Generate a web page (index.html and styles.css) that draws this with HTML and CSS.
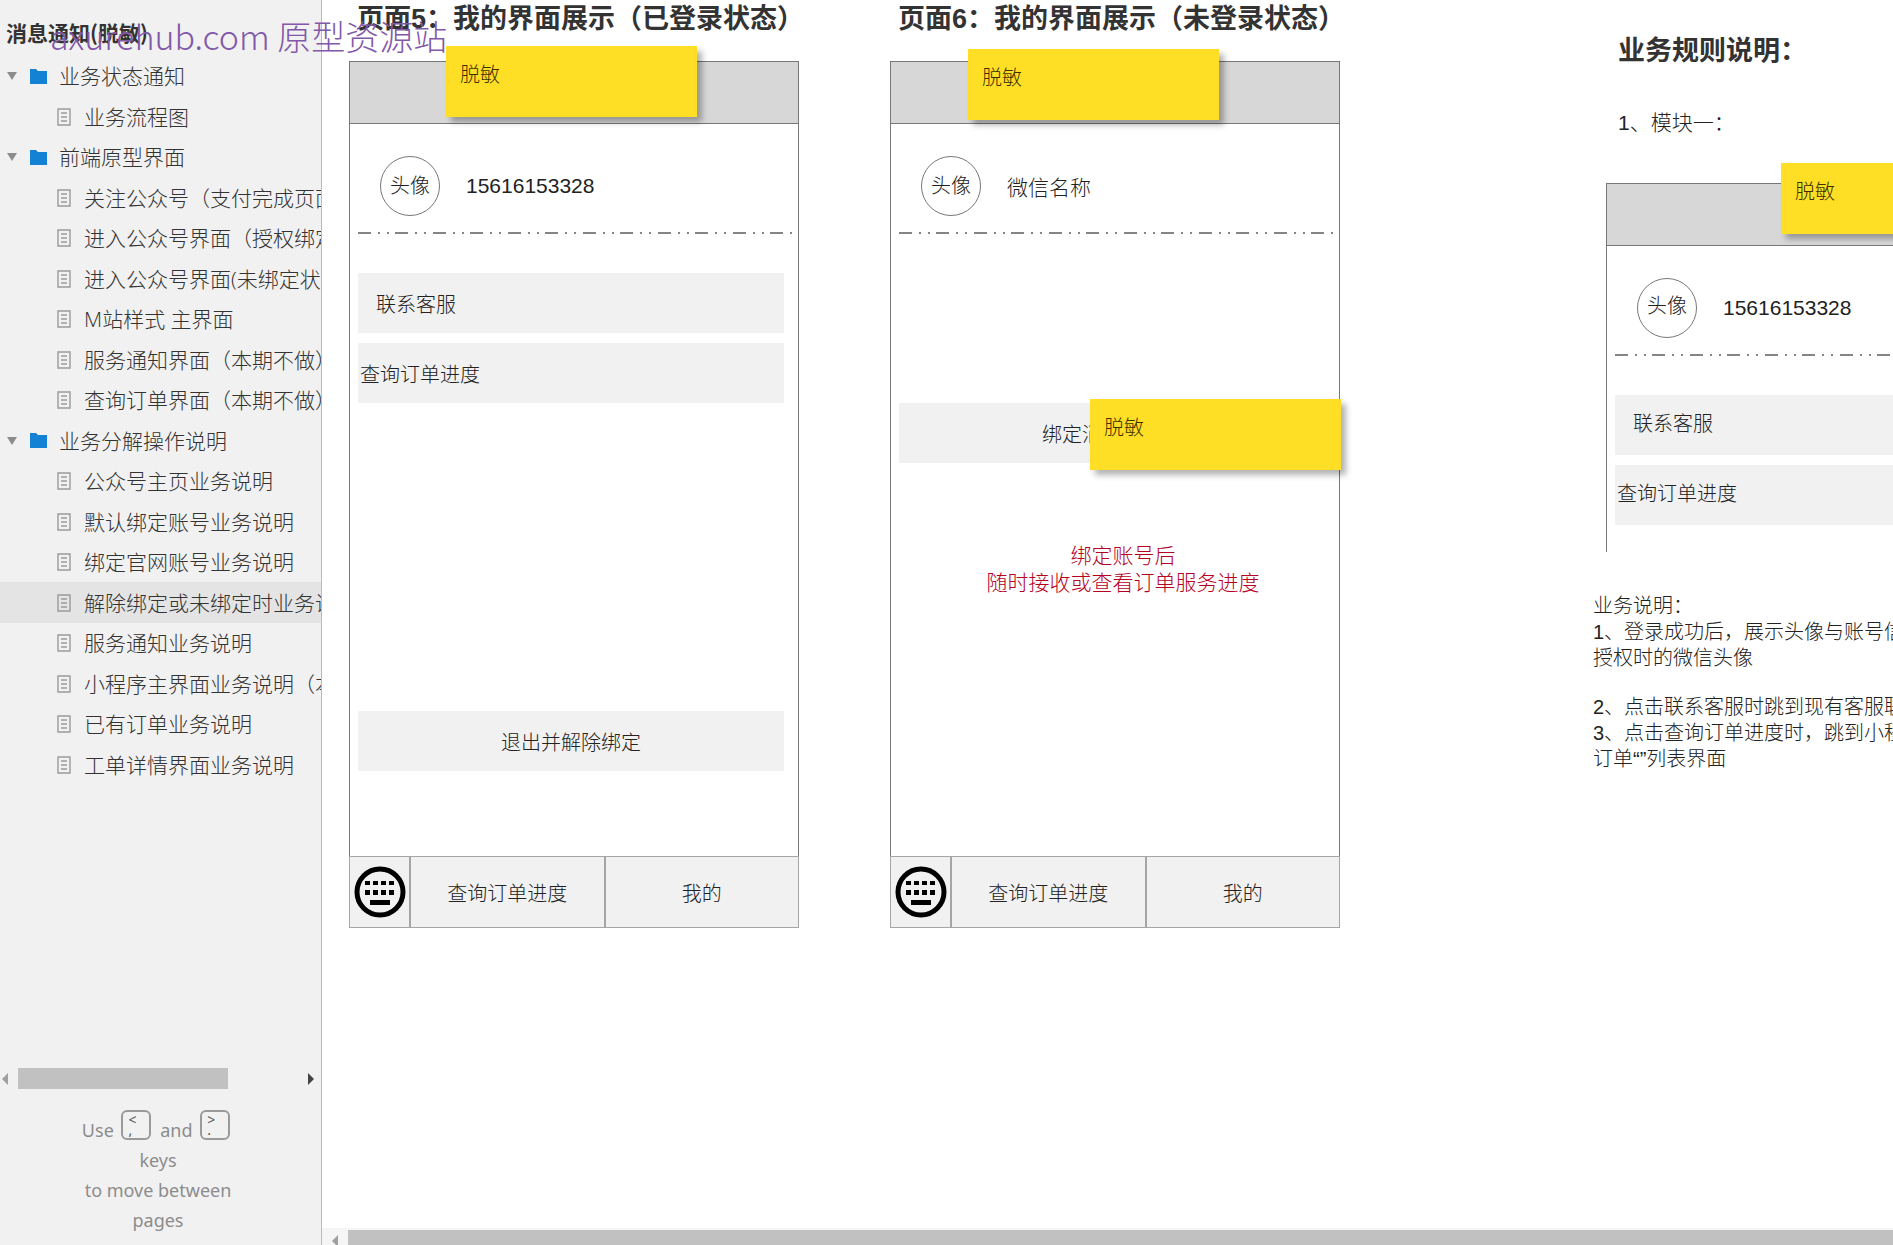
FILE: index.html
```html
<!DOCTYPE html>
<html lang="zh-CN">
<head>
  <meta charset="UTF-8">
  <meta name="viewport" content="width=device-width, initial-scale=1.0">
  <title>消息通知(脱敏)</title>
  <link rel="stylesheet" href="styles.css">
</head>
<body>

<!-- shared icons -->
<svg class="sprite" aria-hidden="true">
  <symbol id="icon-page" viewBox="0 0 14 18">
    <path d="M1 1H13V17H1Z M4 5H10 M4 9H10 M4 13H10" fill="none" stroke="#9a9a9a" stroke-width="1.4"/>
  </symbol>
  <symbol id="icon-folder" viewBox="0 0 17 15">
    <path d="M0 0H6L8 2H17V15H0Z" fill="#1482d4"/>
  </symbol>
  <symbol id="icon-keyboard" viewBox="0 0 52 52">
    <circle cx="26" cy="26" r="23" fill="none" stroke="#000" stroke-width="5"/>
    <path d="M11 15h5v4h-5z M19 15h5v4h-5z M27 15h5v4h-5z M35 15h5v4h-5z M11 24h5v5h-5z M19 24h5v5h-5z M27 24h5v5h-5z M35 24h5v5h-5z M16 34h20v5h-20z" fill="#000"/>
  </symbol>
  <symbol id="icon-left" viewBox="0 0 6 12"><path d="M6 0V12L0 6Z" fill="currentColor"/></symbol>
  <symbol id="icon-right" viewBox="0 0 6 12"><path d="M0 0V12L6 6Z" fill="currentColor"/></symbol>
</svg>

<div class="watermark">axurehub.com 原型资源站</div>

<aside class="sidebar">
  <h1 class="project-name">消息通知(脱敏)</h1>

  <ul class="tree">
    <li class="folder"><span class="arrow"></span><svg><use href="#icon-folder"/></svg><a href="#">业务状态通知</a></li>
    <li class="page"><svg><use href="#icon-page"/></svg><a href="#">业务流程图</a></li>
    <li class="folder"><span class="arrow"></span><svg><use href="#icon-folder"/></svg><a href="#">前端原型界面</a></li>
    <li class="page"><svg><use href="#icon-page"/></svg><a href="#">关注公众号（支付完成页面）</a></li>
    <li class="page"><svg><use href="#icon-page"/></svg><a href="#">进入公众号界面（授权绑定）</a></li>
    <li class="page"><svg><use href="#icon-page"/></svg><a href="#">进入公众号界面(未绑定状态)</a></li>
    <li class="page"><svg><use href="#icon-page"/></svg><a href="#">M站样式 主界面</a></li>
    <li class="page"><svg><use href="#icon-page"/></svg><a href="#">服务通知界面（本期不做）</a></li>
    <li class="page"><svg><use href="#icon-page"/></svg><a href="#">查询订单界面（本期不做）</a></li>
    <li class="folder"><span class="arrow"></span><svg><use href="#icon-folder"/></svg><a href="#">业务分解操作说明</a></li>
    <li class="page"><svg><use href="#icon-page"/></svg><a href="#">公众号主页业务说明</a></li>
    <li class="page"><svg><use href="#icon-page"/></svg><a href="#">默认绑定账号业务说明</a></li>
    <li class="page"><svg><use href="#icon-page"/></svg><a href="#">绑定官网账号业务说明</a></li>
    <li class="page selected"><svg><use href="#icon-page"/></svg><a href="#">解除绑定或未绑定时业务说明</a></li>
    <li class="page"><svg><use href="#icon-page"/></svg><a href="#">服务通知业务说明</a></li>
    <li class="page"><svg><use href="#icon-page"/></svg><a href="#">小程序主界面业务说明（本期不做）</a></li>
    <li class="page"><svg><use href="#icon-page"/></svg><a href="#">已有订单业务说明</a></li>
    <li class="page"><svg><use href="#icon-page"/></svg><a href="#">工单详情界面业务说明</a></li>
  </ul>

  <div class="tree-scroll">
    <svg class="scroll-arrow"><use href="#icon-left"/></svg>
    <div class="track"><div class="thumb"></div></div>
    <svg class="scroll-arrow active"><use href="#icon-right"/></svg>
  </div>

  <div class="hint">
    Use <kbd>&lt;<br>,</kbd> and <kbd>&gt;<br>.</kbd><br>
    keys<br>
    to move between<br>
    pages
  </div>
</aside>

<main class="canvas">
  <div class="boards">

    <section class="board">
      <h2>页面5：我的界面展示（已登录状态）</h2>
      <div class="phone">
        <div class="phone-header"></div>
        <div class="note note-login">脱敏</div>
        <div class="user">
          <span class="avatar">头像</span>
          <span class="name">15616153328</span>
        </div>
        <svg class="divider"><line x1="0" y1="1" x2="100%" y2="1"/></svg>
        <div class="menu">
          <button class="row contact">联系客服</button>
          <button class="row order">查询订单进度</button>
        </div>
        <button class="row logout">退出并解除绑定</button>
        <nav class="tabbar">
          <button class="keyboard" aria-label="键盘"><svg><use href="#icon-keyboard"/></svg></button>
          <button>查询订单进度</button>
          <button>我的</button>
        </nav>
      </div>
    </section>

    <section class="board">
      <h2>页面6：我的界面展示（未登录状态）</h2>
      <div class="phone">
        <div class="phone-header"></div>
        <div class="note note-guest">脱敏</div>
        <div class="user">
          <span class="avatar">头像</span>
          <span class="name">微信名称</span>
        </div>
        <svg class="divider"><line x1="0" y1="1" x2="100%" y2="1"/></svg>
        <div class="bind">
          <button class="row">绑定消息服务号</button>
          <div class="note note-bind">脱敏</div>
        </div>
        <p class="tip">绑定账号后<br>随时接收或查看订单服务进度</p>
        <nav class="tabbar">
          <button class="keyboard" aria-label="键盘"><svg><use href="#icon-keyboard"/></svg></button>
          <button>查询订单进度</button>
          <button>我的</button>
        </nav>
      </div>
    </section>

    <section class="rules">
      <h2>业务规则说明：</h2>
      <p class="module">1、模块一：</p>
      <div class="phone preview">
        <div class="phone-header"></div>
        <div class="note note-preview">脱敏</div>
        <div class="user">
          <span class="avatar">头像</span>
          <span class="name">15616153328</span>
        </div>
        <svg class="divider"><line x1="0" y1="1" x2="100%" y2="1"/></svg>
        <div class="menu">
          <button class="row contact">联系客服</button>
          <button class="row order">查询订单进度</button>
        </div>
      </div>
      <div class="desc">
        <p>业务说明：<br>1、登录成功后，展示头像与账号信息，头像为<br>授权时的微信头像</p>
        <p>2、点击联系客服时跳到现有客服联系界面<br>3、点击查询订单进度时，跳到小程序的“我的<br>订单“”列表界面</p>
      </div>
    </section>

  </div>

  <div class="canvas-scroll">
    <svg class="scroll-arrow"><use href="#icon-left"/></svg>
    <div class="thumb"></div>
  </div>
</main>

</body>
</html>
```
FILE: styles.css
```css
* {
  box-sizing: border-box;
}

body {
  margin: 0;
  height: 100vh;
  display: flex;
  overflow: hidden;
  background: #fff;
  color: #222;
  font-family: "Liberation Sans", "Noto Sans CJK SC", sans-serif;
  font-size: 20px;
  font-weight: 300;
}

h1, h2, p, ul {
  margin: 0;
  padding: 0;
}

button {
  border: none;
  padding: 0;
  background: #f1f1f1;
  color: inherit;
  font: inherit;
  cursor: pointer;
}

.sprite {
  position: absolute;
  width: 0;
  height: 0;
}

.watermark {
  position: absolute;
  left: 50px;
  top: 12px;
  z-index: 5;
  color: #8258a8;
  font-family: "Noto Sans CJK SC", sans-serif;
  font-size: 34px;
  line-height: 48px;
  white-space: nowrap;
  pointer-events: none;
}

/* sidebar */

.sidebar {
  flex: none;
  width: 322px;
  display: flex;
  flex-direction: column;
  overflow: hidden;
  background: #f1f1f1;
  border-right: 1px solid #bbb;
  color: #333;
  font-family: "Noto Sans CJK SC", sans-serif;
}

.project-name {
  padding: 10px 6px 2px;
  font-size: 21px;
  line-height: 44px;
}

.tree {
  list-style: none;
  font-family: "Open Sans", "Noto Sans CJK SC", sans-serif;
}

.tree li {
  display: flex;
  align-items: center;
  height: 40px;
  font-size: 21px;
  white-space: nowrap;
}

.tree li:nth-child(even) {
  height: 41px;
}

.tree svg {
  flex: none;
}

.tree a {
  color: inherit;
  line-height: 40px;
  text-decoration: none;
}

.folder {
  padding-left: 7px;
}

.folder svg {
  width: 17px;
  height: 15px;
  margin: 0 12px 0 13px;
}

.page {
  padding-left: 57px;
}

.page svg {
  width: 14px;
  height: 18px;
  margin-right: 13px;
}

.selected {
  background: #e4e4e4;
}

.arrow {
  border: 5px solid transparent;
  border-top: 8px solid #8c8c8c;
  border-bottom: 0;
}

.scroll-arrow {
  flex: none;
  width: 6px;
  height: 12px;
  color: #a0a0a0;
}

.scroll-arrow.active {
  color: #444;
}

.tree-scroll {
  display: flex;
  align-items: center;
  justify-content: space-between;
  margin-top: auto;
  padding: 0 7px 0 2px;
}

.track {
  flex: 1;
  margin: 0 10px;
}

.thumb {
  width: 75%;
  height: 21px;
  background: #c1c1c1;
}

.hint {
  padding: 21px 5px 10px 0;
  color: #8c8c8c;
  font-family: "Noto Sans", sans-serif;
  font-size: 18px;
  font-weight: 400;
  line-height: 30px;
  text-align: center;
}

kbd {
  display: inline-block;
  width: 30px;
  height: 30px;
  margin: 0 4px 0 3px;
  padding: 3px 5px;
  border: 2px solid #9a9a9a;
  border-radius: 6px;
  overflow: hidden;
  color: #555;
  font-family: inherit;
  font-size: 14px;
  line-height: 10px;
  text-align: left;
  vertical-align: -3px;
}

/* canvas */

.canvas {
  flex: 1;
  min-width: 0;
  display: flex;
  flex-direction: column;
  overflow: hidden;
}

.boards {
  flex: 1;
  display: flex;
  align-items: flex-start;
  gap: 91px;
  padding-left: 27px;
}

h2 {
  color: #333;
  font-size: 27px;
  line-height: 38px;
  white-space: nowrap;
}

.board {
  flex: none;
  width: 450px;
}

.board h2 {
  margin-bottom: 23px;
  padding-left: 8px;
}

.phone {
  position: relative;
  display: flex;
  flex-direction: column;
  min-height: 867px;
  border: 1px solid #777;
}

.phone-header {
  height: 62px;
  background: #d7d7d7;
  border-bottom: 1px solid #777;
}

.note {
  position: absolute;
  width: 251px;
  height: 71px;
  padding: 14px;
  background: #ffdf25;
  box-shadow: 5px 5px 6px rgba(0, 0, 0, 0.3);
  color: #3d3000;
  line-height: 30px;
}

.note-login {
  left: 96px;
  top: -16px;
}

.note-guest {
  left: 77px;
  top: -13px;
}

.note-bind {
  right: -56px;
  top: -4px;
}

.note-preview {
  left: 174px;
  top: -21px;
}

.user {
  display: flex;
  align-items: center;
  gap: 26px;
  padding: 32px 30px 16px;
  font-size: 21px;
}

.avatar {
  width: 60px;
  height: 60px;
  border: 1px solid #777;
  border-radius: 50%;
  font-size: 20px;
  line-height: 58px;
  text-align: center;
}

.divider {
  width: calc(100% - 13px);
  height: 2px;
  margin-left: 8px;
  stroke: #858585;
  stroke-width: 2;
  stroke-dasharray: 13 7 2 7 2 6 13 7 2 7 2 7;
}

.row {
  width: 426px;
  height: 60px;
  margin-left: 8px;
}

.menu {
  display: grid;
  gap: 10px;
  margin-top: 39px;
}

.contact {
  padding-left: 18px;
  text-align: left;
}

.order {
  padding-left: 2px;
  text-align: left;
}

.logout {
  margin-top: auto;
  margin-bottom: 85px;
}

.bind {
  position: relative;
  width: 394px;
  margin-top: 169px;
}

.tip {
  margin-top: 79px;
  padding-left: 16px;
  color: #b5001f;
  font-size: 21px;
  line-height: 27px;
  text-align: center;
}

.tabbar {
  display: flex;
  height: 72px;
  margin: 0 -1px -1px;
}

.tip + .tabbar {
  margin-top: auto;
}

.tabbar button {
  flex: 1;
  border: 1px solid #a5a5a5;
}

.tabbar .keyboard {
  flex: none;
  width: 61px;
}

.keyboard svg {
  display: block;
  width: 52px;
  height: 52px;
  margin: auto;
}

/* rules column */

.rules {
  flex: none;
  width: 560px;
  margin-left: 162px;
  padding-top: 32px;
}

.rules h2,
.module {
  padding-left: 25px;
}

.module {
  margin: 38px 0 45px;
  font-size: 21px;
  line-height: 30px;
}

.preview {
  width: 450px;
  min-height: 369px;
  margin-left: 13px;
  border-bottom: none;
}

.preview .avatar {
  line-height: 54px;
}

.preview .row {
  padding-bottom: 6px;
}

.desc {
  margin-top: 41px;
  line-height: 26px;
  white-space: nowrap;
}

.desc p {
  margin-bottom: 23px;
}

.canvas-scroll {
  flex: none;
  display: flex;
  height: 17px;
  padding: 2px 0 0 10px;
  gap: 10px;
  background: #f5f5f5;
  overflow: hidden;
}

.canvas-scroll .scroll-arrow {
  margin-top: 5px;
}

.canvas-scroll .thumb {
  flex: 1;
}
```
